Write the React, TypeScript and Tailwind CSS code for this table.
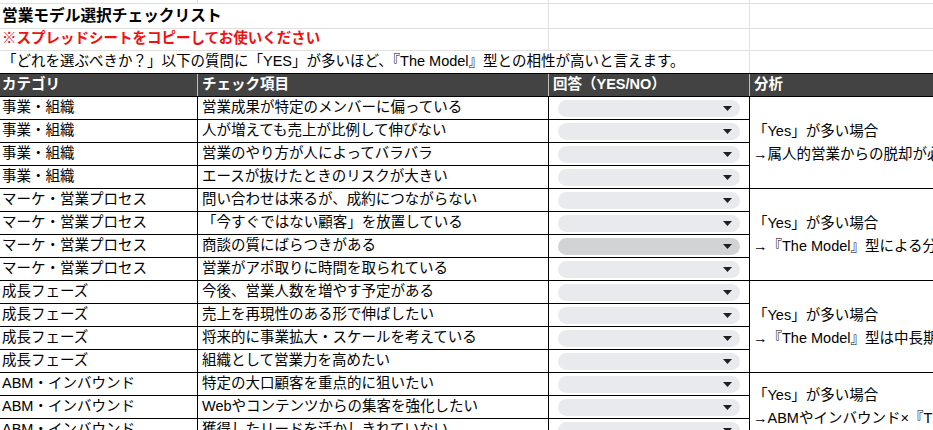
const rows = [
  { cat: "事業・組織", q: "営業成果が特定のメンバーに偏っている" },
  { cat: "事業・組織", q: "人が増えても売上が比例して伸びない" },
  { cat: "事業・組織", q: "営業のやり方が人によってバラバラ" },
  { cat: "事業・組織", q: "エースが抜けたときのリスクが大きい" },
  { cat: "マーケ・営業プロセス", q: "問い合わせは来るが、成約につながらない" },
  { cat: "マーケ・営業プロセス", q: "「今すぐではない顧客」を放置している" },
  { cat: "マーケ・営業プロセス", q: "商談の質にばらつきがある", active: true },
  { cat: "マーケ・営業プロセス", q: "営業がアポ取りに時間を取られている" },
  { cat: "成長フェーズ", q: "今後、営業人数を増やす予定がある" },
  { cat: "成長フェーズ", q: "売上を再現性のある形で伸ばしたい" },
  { cat: "成長フェーズ", q: "将来的に事業拡大・スケールを考えている" },
  { cat: "成長フェーズ", q: "組織として営業力を高めたい" },
  { cat: "ABM・インバウンド", q: "特定の大口顧客を重点的に狙いたい" },
  { cat: "ABM・インバウンド", q: "Webやコンテンツからの集客を強化したい" },
  { cat: "ABM・インバウンド", q: "獲得したリードを活かしきれていない" },
];

// analysis text sits in merged cells, keyed by the first row of the group
const analysis: Record<number, { span: 3 | 4; text: string }> = {
  0: { span: 4, text: "→属人的営業からの脱却が必要です" },
  4: { span: 4, text: "→『The Model』型による分業化が有効です" },
  8: { span: 4, text: "→『The Model』型は中長期的な成長に有効です" },
  12: { span: 3, text: "→ABMやインバウンド×『The Model』型が有効です" },
};

function Dropdown({ active }: { active?: boolean }) {
  return (
    <div
      className={`ml-[9px] flex h-[17px] w-[182px] items-center justify-end rounded-full pr-[8px] ${
        active ? "bg-[#d2d3d5]" : "bg-[#e8eaed]"
      }`}
    >
      <svg width="9" height="5" viewBox="0 0 9 5">
        <path d="M0 0h9L4.5 5z" fill="#1f1f1f" />
      </svg>
    </div>
  );
}

export default function App() {
  const cols = "grid grid-cols-[198px_351px_201px_1fr]";

  return (
    <div className="h-[430px] w-[933px] overflow-hidden bg-white font-['Liberation_Sans','Noto_Sans_CJK_JP',sans-serif] text-[14.5px] text-black">
      {/* sheet rows above the table */}
      <div className={`${cols} h-[4px]`}>
        <div className="border-b border-r border-[#e0e0e0]" />
        <div className="border-b border-r border-[#e0e0e0]" />
        <div className="border-b border-r border-[#e0e0e0]" />
        <div className="border-b border-[#e0e0e0]" />
      </div>
      <div className={`${cols} h-[24px]`}>
        <div className="col-span-2 flex items-center whitespace-nowrap border-b border-r border-[#e0e0e0] pl-[2px] text-[15.7px] font-bold">
          営業モデル選択チェックリスト
        </div>
        <div className="border-b border-r border-[#e0e0e0]" />
        <div className="border-b border-[#e0e0e0]" />
      </div>
      <div className={`${cols} h-[23px]`}>
        <div className="col-span-2 flex items-center whitespace-nowrap border-b border-r border-[#e0e0e0] pl-[2px] font-bold text-[#ee1111]">
          ※スプレッドシートをコピーしてお使いください
        </div>
        <div className="border-b border-r border-[#e0e0e0]" />
        <div className="border-b border-[#e0e0e0]" />
      </div>
      <div className={`${cols} h-[22px]`}>
        <div className="col-span-3 flex items-center whitespace-nowrap border-r border-[#e0e0e0] pl-[2px]">
          「どれを選ぶべきか？」以下の質問に「YES」が多いほど、『The Model』型との相性が高いと言えます。
        </div>
        <div />
      </div>

      {/* table header */}
      <div className={`${cols} h-[24px] border-y border-black bg-[#434343] font-bold text-white`}>
        <div className="flex items-center border-r border-[#bdbdbd] pl-[2px]">カテゴリ</div>
        <div className="flex items-center border-r border-[#bdbdbd] pl-[4px]">チェック項目</div>
        <div className="flex items-center border-r border-[#bdbdbd] pl-[4px]">回答（YES/NO）</div>
        <div className="flex items-center pl-[4px]">分析</div>
      </div>

      {/* checklist */}
      <div className={`${cols} auto-rows-[23px]`}>
        {rows.map((r, i) => {
          const a = analysis[i];
          return [
            <div key={`a${i}`} className="flex items-center whitespace-nowrap border-b border-r border-black pl-[2px]">
              {r.cat}
            </div>,
            <div key={`b${i}`} className="flex items-center whitespace-nowrap border-b border-r border-black pl-[4px]">
              {r.q}
            </div>,
            <div key={`c${i}`} className="flex items-center border-b border-r border-black">
              <Dropdown active={r.active} />
            </div>,
            a ? (
              <div
                key={`d${i}`}
                className={`flex flex-col justify-center overflow-hidden whitespace-nowrap border-b border-black pl-[3px] leading-[23px] ${
                  a.span === 4 ? "row-span-4" : "row-span-3"
                }`}
              >
                <div>「Yes」が多い場合</div>
                <div>{a.text}</div>
              </div>
            ) : null,
          ];
        })}
      </div>
    </div>
  );
}
